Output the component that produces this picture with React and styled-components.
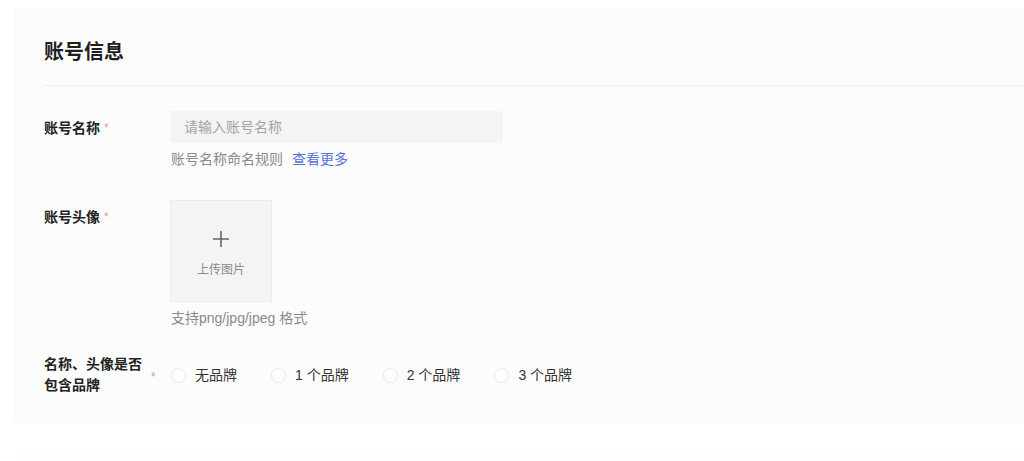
import React from 'react';
import styled, { createGlobalStyle } from 'styled-components';

const GlobalStyle = createGlobalStyle`
  body {
    margin: 0;
    background: #ffffff;
    font-family: "Liberation Sans", "Noto Sans CJK SC", sans-serif;
    color: #222222;
    overflow: hidden;
  }
`;

const Page = styled.div`
  padding: 8px 0 0 14px;
`;

const Card = styled.div`
  background: #fcfcfc;
  height: 415px;
  padding-left: 29px;
  box-sizing: border-box;
`;

const Header = styled.div`
  padding: 30px 0 19px 1px;
  border-bottom: 1px solid #eeeeee;
`;

const Title = styled.h2`
  margin: 0;
  font-size: 20px;
  line-height: 28px;
  font-weight: 600;
  color: #1f1f1f;
`;

const Form = styled.div`
  padding: 25px 0 0 1px;
`;

const Row = styled.div`
  display: flex;
  align-items: ${(p) => (p.$center ? 'center' : 'flex-start')};
  margin-top: ${(p) => p.$gap || 0}px;
`;

const Label = styled.div`
  width: 126px;
  flex-shrink: 0;
  display: flex;
  align-items: center;
  font-size: 14px;
  line-height: ${(p) => (p.$multi ? 21 : 32)}px;
  padding-top: ${(p) => (p.$multi ? 0 : 1)}px;
  font-weight: 600;
  color: #222222;
`;

const LabelText = styled.span`
  width: ${(p) => (p.$multi ? '100px' : 'auto')};
`;

const Star = styled.span`
  color: #e29a9a;
  font-size: 12px;
  font-weight: 400;
  margin-left: ${(p) => (p.$multi ? 7 : 4)}px;
  margin-top: ${(p) => (p.$multi ? 4 : 0)}px;
`;

const Field = styled.div`
  display: flex;
  flex-direction: column;
`;

const Input = styled.input`
  width: 333px;
  height: 32px;
  box-sizing: border-box;
  border: none;
  outline: none;
  background: #f4f4f4;
  padding: 0 14px;
  font-family: inherit;
  font-size: 14px;
  color: #222222;

  &::placeholder {
    color: #a3a3a3;
  }
`;

const Hint = styled.div`
  margin-top: 6px;
  font-size: 14px;
  line-height: 20px;
  color: #8a8a8a;
  padding-left: 1px;
`;

const Link = styled.a`
  color: #5573d6;
  margin-left: 9px;
  text-decoration: none;
  cursor: pointer;
`;

const Upload = styled.div`
  width: 102px;
  height: 102px;
  box-sizing: border-box;
  background: #f4f4f4;
  border: 1px solid #ebebeb;
  display: flex;
  flex-direction: column;
  align-items: center;
  padding-top: 29px;
`;

const UploadText = styled.span`
  margin-top: 14px;
  font-size: 12px;
  line-height: 16px;
  color: #8a8a8a;
`;

const RadioGroup = styled.div`
  display: flex;
  align-items: center;
  gap: 34px;
  padding-left: 1px;
`;

const RadioItem = styled.label`
  display: flex;
  align-items: center;
  gap: 9px;
  font-size: 14px;
  line-height: 20px;
  color: #333333;
`;

const Circle = styled.span`
  width: 15px;
  height: 15px;
  box-sizing: border-box;
  border-radius: 50%;
  border: 1px solid #e6e6e6;
  background: #ffffff;
`;

const NextCard = styled.div`
  margin-top: 25px;
  margin-left: 2px;
  height: 13px;
  background: #fdfdfd;
`;

const options = ['无品牌', '1 个品牌', '2 个品牌', '3 个品牌'];

export default function App() {
  return (
    <>
      <GlobalStyle />
      <Page>
        <Card>
          <Header>
            <Title>账号信息</Title>
          </Header>
          <Form>
            <Row>
              <Label>
                <LabelText>账号名称</LabelText>
                <Star>*</Star>
              </Label>
              <Field>
                <Input placeholder='请输入账号名称' />
                <Hint>
                  账号名称命名规则
                  <Link>查看更多</Link>
                </Hint>
              </Field>
            </Row>
            <Row $gap={31}>
              <Label>
                <LabelText>账号头像</LabelText>
                <Star>*</Star>
              </Label>
              <Field>
                <Upload>
                  <svg width='18' height='18' viewBox='0 0 18 18'>
                    <path
                      d='M9 1v16M1 9h16'
                      stroke='#666'
                      strokeWidth='1.6'
                      fill='none'
                    />
                  </svg>
                  <UploadText>上传图片</UploadText>
                </Upload>
                <Hint>支持png/jpg/jpeg 格式</Hint>
              </Field>
            </Row>
            <Row $gap={26} $center>
              <Label $multi>
                <LabelText $multi>名称、头像是否包含品牌</LabelText>
                <Star $multi>*</Star>
              </Label>
              <RadioGroup>
                {options.map((o) => (
                  <RadioItem key={o}>
                    <Circle />
                    {o}
                  </RadioItem>
                ))}
              </RadioGroup>
            </Row>
          </Form>
        </Card>
        <NextCard />
      </Page>
    </>
  );
}
